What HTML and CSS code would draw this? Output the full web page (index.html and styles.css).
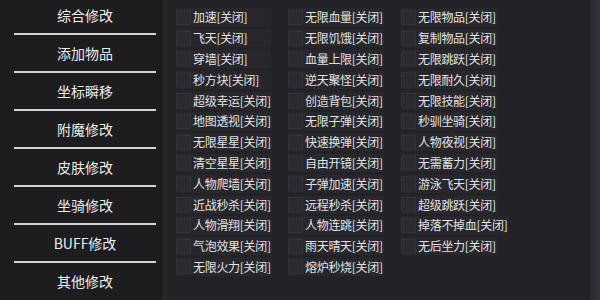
FILE: index.html
```html
<!DOCTYPE html>
<html lang="zh-CN">
<head>
<meta charset="utf-8">
<link rel="stylesheet" href="styles.css">
</head>
<body>
<div class="app">
  <nav class="sidebar">
    <div class="menu">
      <div class="menu-item">综合修改</div>
      <div class="menu-item">添加物品</div>
      <div class="menu-item">坐标瞬移</div>
      <div class="menu-item">附魔修改</div>
      <div class="menu-item">皮肤修改</div>
      <div class="menu-item">坐骑修改</div>
      <div class="menu-item">BUFF修改</div>
      <div class="menu-item last">其他修改</div>
    </div>
  </nav>
  <div class="divider"></div>
  <main class="content">
    <div class="grid">
      <label class="opt"><span class="box"></span><span class="txt">加速[关闭]</span></label>
      <label class="opt"><span class="box"></span><span class="txt">无限血量[关闭]</span></label>
      <label class="opt"><span class="box"></span><span class="txt">无限物品[关闭]</span></label>
      <label class="opt"><span class="box"></span><span class="txt">飞天[关闭]</span></label>
      <label class="opt"><span class="box"></span><span class="txt">无限饥饿[关闭]</span></label>
      <label class="opt"><span class="box"></span><span class="txt">复制物品[关闭]</span></label>
      <label class="opt"><span class="box"></span><span class="txt">穿墙[关闭]</span></label>
      <label class="opt"><span class="box"></span><span class="txt">血量上限[关闭]</span></label>
      <label class="opt"><span class="box"></span><span class="txt">无限跳跃[关闭]</span></label>
      <label class="opt"><span class="box"></span><span class="txt">秒方块[关闭]</span></label>
      <label class="opt"><span class="box"></span><span class="txt">逆天聚怪[关闭]</span></label>
      <label class="opt"><span class="box"></span><span class="txt">无限耐久[关闭]</span></label>
      <label class="opt"><span class="box"></span><span class="txt">超级幸运[关闭]</span></label>
      <label class="opt"><span class="box"></span><span class="txt">创造背包[关闭]</span></label>
      <label class="opt"><span class="box"></span><span class="txt">无限技能[关闭]</span></label>
      <label class="opt"><span class="box"></span><span class="txt">地图透视[关闭]</span></label>
      <label class="opt"><span class="box"></span><span class="txt">无限子弹[关闭]</span></label>
      <label class="opt"><span class="box"></span><span class="txt">秒驯坐骑[关闭]</span></label>
      <label class="opt"><span class="box"></span><span class="txt">无限星星[关闭]</span></label>
      <label class="opt"><span class="box"></span><span class="txt">快速换弹[关闭]</span></label>
      <label class="opt"><span class="box"></span><span class="txt">人物夜视[关闭]</span></label>
      <label class="opt"><span class="box"></span><span class="txt">清空星星[关闭]</span></label>
      <label class="opt"><span class="box"></span><span class="txt">自由开镜[关闭]</span></label>
      <label class="opt"><span class="box"></span><span class="txt">无需蓄力[关闭]</span></label>
      <label class="opt"><span class="box"></span><span class="txt">人物爬墙[关闭]</span></label>
      <label class="opt"><span class="box"></span><span class="txt">子弹加速[关闭]</span></label>
      <label class="opt"><span class="box"></span><span class="txt">游泳飞天[关闭]</span></label>
      <label class="opt"><span class="box"></span><span class="txt">近战秒杀[关闭]</span></label>
      <label class="opt"><span class="box"></span><span class="txt">远程秒杀[关闭]</span></label>
      <label class="opt"><span class="box"></span><span class="txt">超级跳跃[关闭]</span></label>
      <label class="opt"><span class="box"></span><span class="txt">人物滑翔[关闭]</span></label>
      <label class="opt"><span class="box"></span><span class="txt">人物连跳[关闭]</span></label>
      <label class="opt"><span class="box"></span><span class="txt">掉落不掉血[关闭]</span></label>
      <label class="opt"><span class="box"></span><span class="txt">气泡效果[关闭]</span></label>
      <label class="opt"><span class="box"></span><span class="txt">雨天晴天[关闭]</span></label>
      <label class="opt"><span class="box"></span><span class="txt">无后坐力[关闭]</span></label>
      <label class="opt"><span class="box"></span><span class="txt">无限火力[关闭]</span></label>
      <label class="opt"><span class="box"></span><span class="txt">熔炉秒烧[关闭]</span></label>
    </div>
  </main>
  <div class="edge"></div>
</div>
</body>
</html>
```

FILE: styles.css
```css
html, body {
  margin: 0;
  padding: 0;
  width: 600px;
  height: 300px;
  overflow: hidden;
  background: #232227;
  font-family: "Noto Sans CJK SC", "Noto Sans", sans-serif;
  color: #e4e4e6;
}

.app {
  display: flex;
  width: 600px;
  height: 300px;
}

.sidebar {
  width: 163px;
  flex: none;
  background: #1d1d20;
  overflow: hidden;
}

.menu {
  margin-top: -3px;
  display: flex;
  flex-direction: column;
}

.menu-item {
  height: 36px;
  margin: 0 7px 0 14px;
  border-bottom: 2px solid #d4d4d6;
  display: flex;
  align-items: center;
  justify-content: center;
  font-size: 14px;
  color: #ececee;
}

.menu-item.last {
  border-bottom: none;
}

.divider {
  width: 4px;
  flex: none;
  background: #28272c;
}

.content {
  flex: 1;
  padding: 7px 0 0 9px;
}

.grid {
  display: grid;
  grid-template-columns: 112px 113px 112px;
  grid-auto-rows: 20.8px;
}

.opt {
  display: flex;
  align-items: center;
  gap: 2px;
  align-self: center;
  justify-self: start;
  min-width: 94px;
  height: 18px;
  background: #28272c;
  padding-right: 1px;
}

.box {
  width: 13px;
  height: 13px;
  border: 1px solid #34333a;
  background: #2b2a30;
  flex: none;
}

.txt {
  font-size: 12px;
  line-height: 18px;
  color: #e2e2e4;
  letter-spacing: -0.3px;
  white-space: nowrap;
}

.edge {
  width: 10px;
  flex: none;
  background: linear-gradient(to right, #2a2930, #34333a);
}
```
